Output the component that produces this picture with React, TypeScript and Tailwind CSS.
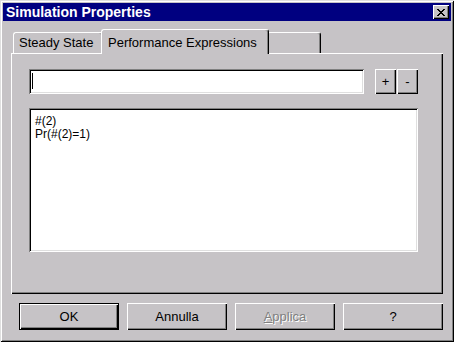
import React from "react";

const raised =
  "shadow-[inset_1px_1px_0_#fff,inset_-1px_-1px_0_#000,inset_-2px_-2px_0_#808080]";
const sunken =
  "shadow-[inset_1px_1px_0_#808080,inset_-1px_-1px_0_#fff,inset_2px_2px_0_#000,inset_-2px_-2px_0_#dfdfdf]";

function Btn({
  children,
  isDefault,
}: {
  children: React.ReactNode;
  isDefault?: boolean;
}) {
  if (isDefault) {
    return (
      <div className="w-[100px] h-[27px] border border-black">
        <div
          className={`w-full h-full flex items-center justify-center text-[13px] text-black ${raised}`}
        >
          {children}
        </div>
      </div>
    );
  }
  return (
    <div
      className={`w-[100px] h-[27px] flex items-center justify-center text-[13px] text-black ${raised}`}
    >
      {children}
    </div>
  );
}

export default function App() {
  return (
    <div
      className="w-[454px] h-[342px] bg-[#c6c3c6] p-[3px] flex flex-col shadow-[inset_1px_1px_0_#dfdfdf,inset_-1px_-1px_0_#000,inset_2px_2px_0_#fff,inset_-2px_-2px_0_#808080]"
      style={{ fontFamily: '"Liberation Sans", Arial, sans-serif' }}
    >
      {/* Title bar */}
      <div className="h-[18px] bg-[#000080] flex items-center justify-between pl-[3px] pr-[2px]">
        <span className="text-white font-bold text-[14px] leading-none">
          Simulation Properties
        </span>
        <div
          className={`w-[16px] h-[14px] bg-[#c6c3c6] flex items-center justify-center ${raised}`}
        >
          <svg width="8" height="7" viewBox="0 0 8 7" shapeRendering="crispEdges">
            <path
              d="M0 0h2v1H0zM6 0h2v1H6zM1 1h2v1H1zM5 1h2v1H5zM2 2h4v1H2zM3 3h2v1H3zM2 4h4v1H2zM1 5h2v1H1zM5 5h2v1H5zM0 6h2v1H0zM6 6h2v1H6z"
              fill="#000"
            />
          </svg>
        </div>
      </div>

      {/* Body */}
      <div className="flex flex-col px-[8px] pt-[8px]">
        {/* Tabs */}
        <div className="h-[24px] flex items-end pl-[2px]">
          <div className="w-[90px] h-[21px] border-t border-l border-white border-r border-r-black rounded-t-[3px] shadow-[inset_-1px_0_0_#808080] flex items-center pl-[5px] text-[13px] text-black">
            Steady State
          </div>
          <div className="relative z-10 -mx-[2px] -mb-[1px] w-[168px] h-[25px] bg-[#c6c3c6] border-t border-l border-white border-r border-r-black rounded-t-[3px] shadow-[inset_-1px_0_0_#808080] flex items-start pt-[3px] pl-[6px] text-[13px] text-black">
            Performance Expressions
          </div>
          <div className="w-[54px] h-[21px] border-t border-l border-white border-r border-r-black rounded-t-[3px] shadow-[inset_-1px_0_0_#808080]" />
        </div>

        {/* Panel */}
        <div
          className={`h-[241px] flex flex-col pl-[18px] pt-[16px] shadow-[inset_1px_1px_0_#fff,inset_-1px_-1px_0_#000,inset_-2px_-2px_0_#808080]`}
        >
          <div className="h-[25px] flex">
            <div className={`w-[335px] h-[25px] bg-white relative ${sunken}`}>
              <div className="absolute left-[3px] top-[4px] w-[1px] h-[16px] bg-black" />
            </div>
            <div
              className={`ml-[11px] w-[21px] h-[25px] flex items-center justify-center text-[13px] text-black ${raised}`}
            >
              +
            </div>
            <div
              className={`ml-[1px] w-[21px] h-[25px] flex items-center justify-center text-[13px] text-black ${raised}`}
            >
              -
            </div>
          </div>
          <div
            className={`mt-[14px] w-[389px] h-[144px] bg-white pl-[6px] pt-[7px] text-[12px] leading-[13px] text-black ${sunken}`}
          >
            <div>#(2)</div>
            <div>Pr(#(2)=1)</div>
          </div>
        </div>

        {/* Buttons */}
        <div className="mt-[9px] flex gap-[8px] pl-[8px]">
          <Btn isDefault>OK</Btn>
          <Btn>Annulla</Btn>
          <div
            className={`w-[100px] h-[27px] flex items-center justify-center text-[13px] text-[#808080] [text-shadow:1px_1px_0_#fff] ${raised}`}
          >
            <span>
              <span className="underline">A</span>pplica
            </span>
          </div>
          <Btn>?</Btn>
        </div>
      </div>
    </div>
  );
}
